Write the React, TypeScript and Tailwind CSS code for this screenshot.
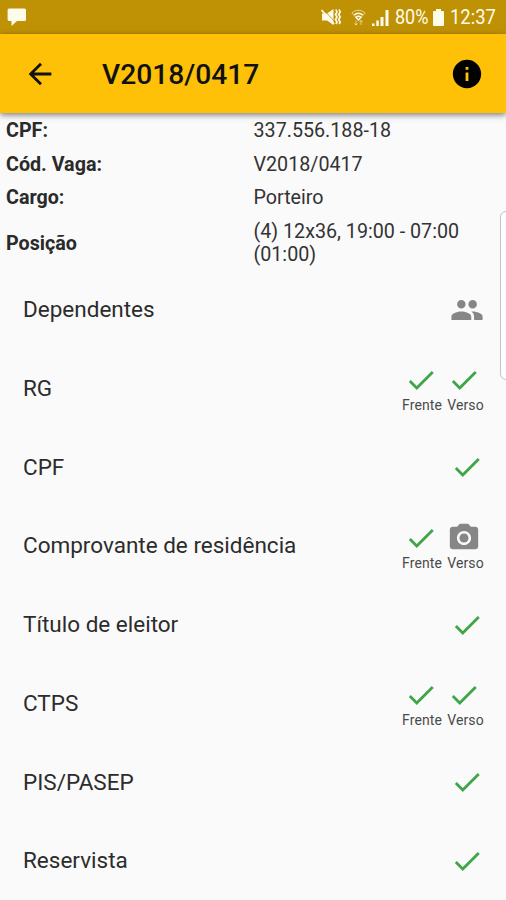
import { MdArrowBack, MdCheck, MdInfo, MdPeople, MdPhotoCamera } from 'react-icons/md';

type Status = 'done' | 'camera' | 'people';

interface DocumentItem {
  label: string;
  status?: Status;
  front?: Status;
  back?: Status;
}

const details = [
  { label: 'CPF:', value: '337.556.188-18' },
  { label: 'Cód. Vaga:', value: 'V2018/0417' },
  { label: 'Cargo:', value: 'Porteiro' },
];

const documents: DocumentItem[] = [
  { label: 'Dependentes', status: 'people' },
  { label: 'RG', front: 'done', back: 'done' },
  { label: 'CPF', status: 'done' },
  { label: 'Comprovante de residência', front: 'done', back: 'camera' },
  { label: 'Título de eleitor', status: 'done' },
  { label: 'CTPS', front: 'done', back: 'done' },
  { label: 'PIS/PASEP', status: 'done' },
  { label: 'Reservista', status: 'done' },
];

const StatusIcon = ({ status }: { status: Status }) => {
  if (status === 'people') return <MdPeople className="size-[34px] text-[#868686]" />;
  if (status === 'camera') return <MdPhotoCamera className="size-[34px] text-[#868686]" />;
  return <MdCheck className="size-[34px] text-[#3fa648]" />;
};

const StatusBar = () => (
  <div className="h-[34px] shrink-0 bg-[#bf9105] text-[#fffbea] flex items-center">
    <svg className="ml-[7px] w-5 h-5" viewBox="0 0 20 20" fill="currentColor">
      <path d="M2 1.5h15.5a1.5 1.5 0 0 1 1.5 1.5v9.5a1.5 1.5 0 0 1-1.5 1.5H10l-5.5 5V14H2A1.5 1.5 0 0 1 .6 12.5V3A1.5 1.5 0 0 1 2 1.5z" />
    </svg>
    <div className="flex-1" />
    {/* vibrate */}
    <svg className="w-5 h-[18px]" viewBox="0 0 20 18" fill="currentColor">
      <path d="M1 5.5h5L12.500 1v16L6 12.500H1z" />
      <path d="M.5 2L13 16" stroke="currentColor" strokeWidth="1.800" />
      <path d="M2.500 1.500L14 14" stroke="#bf9105" strokeWidth=".8" />
      <path d="M14.800 1.500l1.200 2.500-1.500 2.500L16 9l-1.500 2.500L16 14l-1 2M18 1.500L19.200 4l-1.500 2.500L19.200 9l-1.500 2.500 1.500 2.500-1 2" fill="none" stroke="currentColor" strokeWidth="1.700" />
    </svg>
    {/* wifi */}
    <svg className="ml-2.5 w-[15px] h-[17px]" viewBox="0 0 15 17" fill="none" stroke="currentColor">
      <path d="M.8 4a9.500 9.500 0 0 1 13.400 0L7.500 11z" strokeWidth="1" opacity=".6" />
      <path d="M3.300 6a6 6 0 0 1 8.400 0M5 8.300a3.500 3.500 0 0 1 5 0L7.500 11z" strokeWidth="1.400" />
      <path d="M5 11.500V16M3.500 14.500L5 16l1.500-1.500M10 16v-4.500M8.500 13l1.500-1.500 1.500 1.500" strokeWidth="1" opacity=".6" />
    </svg>
    {/* signal */}
    <svg className="ml-1.5 w-[17px] h-[17px]" viewBox="0 0 17 17" fill="currentColor">
      <path d="M0 14.500h2.500V17H0zM4.300 11.500h2.500V17H4.300zM8.500 8h3v9h-3zM13.500 1h3v16h-3z" />
    </svg>
    <span className="ml-[6px] w-[33px] origin-left scale-x-90 text-xl leading-none whitespace-nowrap">80%</span>
    <svg className="ml-[5px] w-[11px] h-[17px]" viewBox="0 0 11 17" fill="currentColor">
      <path d="M3 0h5v2h2a1 1 0 0 1 1 1v13a1 1 0 0 1-1 1H1a1 1 0 0 1-1-1V3a1 1 0 0 1 1-1h2z" />
    </svg>
    <span className="ml-1.5 mr-[9px] w-[47px] origin-left scale-x-[0.92] text-xl leading-none whitespace-nowrap">12:37</span>
  </div>
);

const SideStatus = ({ label, status }: { label: string; status: Status }) => (
  <div className="flex flex-col items-center">
    <div className="pr-[3px]">
      <StatusIcon status={status} />
    </div>
    <span className="-mt-px text-sm leading-[18px] tracking-[0.1px] text-[#4a4a4a]">{label}</span>
  </div>
);

const DocumentRow = ({ item }: { item: DocumentItem }) => (
  <div className="h-[78.75px] shrink-0 flex items-center justify-between pl-[23px] pr-[22px]">
    <span className="text-[22.5px] text-[#2c2c2c]">{item.label}</span>
    {item.front && item.back ? (
      <div className="flex gap-[5px]">
        <SideStatus label="Frente" status={item.front} />
        <SideStatus label="Verso" status={item.back} />
      </div>
    ) : (
      item.status && <StatusIcon status={item.status} />
    )}
  </div>
);

const App = () => {
  return (
    <div className="relative w-[506px] h-[900px] overflow-hidden bg-[#fafafa] font-['Roboto',sans-serif] flex flex-col">
      <StatusBar />
      <header className="relative h-[79px] shrink-0 bg-[#ffc107] text-[#111] flex items-center pl-[23px] pr-[22px] shadow-[0_2px_6px_rgba(0,0,0,0.5)]">
        <MdArrowBack className="size-[34px]" />
        <h1 className="ml-[45px] pt-[3px] flex-1 text-[28.2px] font-medium">V2018/0417</h1>
        <MdInfo className="size-[34px] text-black" />
      </header>

      <dl className="h-[157.5px] shrink-0 px-1.5 pt-px text-[19.7px] leading-[22.5px] text-[#333]">
        {details.map((row) => (
          <div key={row.label} className="flex items-center h-[33.9px]">
            <dt className="w-[247.5px] font-bold text-[#2a2a2a]">{row.label}</dt>
            <dd>{row.value}</dd>
          </div>
        ))}
        <div className="flex items-center h-[56.25px]">
          <dt className="w-[247.5px] font-bold text-[#2a2a2a]">Posição</dt>
          <dd className="w-[240px]">(4) 12x36, 19:00 - 07:00 (01:00)</dd>
        </div>
      </dl>

      <main className="flex flex-col">
        {documents.map((item) => (
          <DocumentRow key={item.label} item={item} />
        ))}
      </main>

      {/* edge panel handle */}
      <div className="absolute top-[211px] -right-1.5 w-3 h-[169px] rounded-lg border border-[#c4c4c4] bg-[#fdfdfd]" />
    </div>
  );
};

export default App;
